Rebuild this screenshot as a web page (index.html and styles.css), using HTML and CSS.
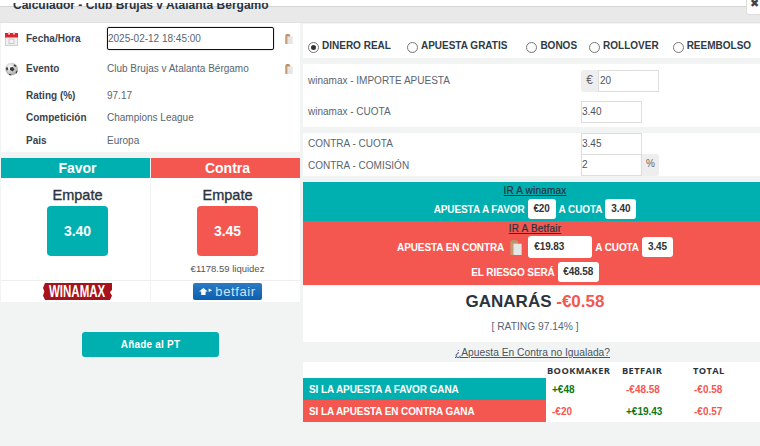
FILE: index.html
```html
<!DOCTYPE html>
<html lang="es">
<head>
<meta charset="utf-8">
<title>Calculador</title>
<link rel="stylesheet" href="styles.css">
</head>
<body>
<svg class="defs" width="0" height="0" aria-hidden="true">
  <symbol id="clip" viewBox="0 0 9 12">
    <rect x="0" y="1" width="6" height="11" fill="#c49a72"/>
    <rect x="2.500" y="3" width="6.500" height="9" fill="#e6e6e4"/>
    <rect x="1" y="0" width="4" height="2" fill="#b8926c"/>
  </symbol>
</svg>
<header class="top">
  <div class="top-bar">
    <h1 class="title">Calculador - Club Brujas v Atalanta Bérgamo</h1>
  </div>
  <button class="close" type="button"><span>✖</span></button>
</header>
<main class="layout">
  <section class="left">
    <div class="info">
      <div class="info-row r1">
        <svg class="ico" viewBox="0 0 13 14"><rect x=".5" y="2" width="12" height="11.500" fill="#f1f1f1" stroke="#cfcfcf"/><rect x="0" y="1" width="13" height="4.500" fill="#d9262e"/><rect x="3" y="0" width="2" height="2.500" fill="#f7c9c9"/><rect x="8" y="0" width="2" height="2.500" fill="#f7c9c9"/><rect x="4" y="7" width="5" height="4.500" fill="none" stroke="#c9c9c9"/></svg>
        <span class="lbl">Fecha/Hora</span>
        <span class="date-box">2025-02-12 18:45:00</span>
        <svg class="clip"><use href="#clip"/></svg>
      </div>
      <div class="info-row r2">
        <svg class="ico" viewBox="0 0 13 14"><defs><radialGradient id="ball" cx="40%" cy="35%" r="70%"><stop offset="0" stop-color="#fff"/><stop offset="1" stop-color="#a2a2a2"/></radialGradient></defs><circle cx="6.500" cy="7" r="6.300" fill="url(#ball)"/><path d="M5 5.500l3-.5 1.500 2.500-2 2-2.500-1.500zM.8 6l1.700-1 .7 2.500-1.500 1.300zM9.500 2.300l2 1.700-.8 1-2.200-1.200zM10.500 10.500l1.800-2.500.2 1.500-1 2.300zM4 12l2.500.3-.5 1.200-2-.6z" fill="#3a3a3a"/></svg>
        <span class="lbl">Evento</span>
        <span class="val">Club Brujas v Atalanta Bérgamo</span>
        <svg class="clip"><use href="#clip"/></svg>
      </div>
      <div class="info-row r3"><span class="ico"></span><span class="lbl">Rating (%)</span><span class="val">97.17</span></div>
      <div class="info-row r4"><span class="ico"></span><span class="lbl">Competición</span><span class="val">Champions League</span></div>
      <div class="info-row r5"><span class="ico"></span><span class="lbl">Pais</span><span class="val">Europa</span></div>
    </div>
    <div class="sides">
      <div class="side">
        <div class="side-head teal">Favor</div>
        <div class="side-body">
          <div class="pick">Empate</div>
          <div class="odd teal">3.40</div>
        </div>
        <div class="logo-cell"><span class="winamax"><span>WINAMAX</span></span></div>
      </div>
      <div class="side">
        <div class="side-head red">Contra</div>
        <div class="side-body">
          <div class="pick">Empate</div>
          <div class="odd red">3.45</div>
          <div class="liq">€1178.59 liquidez</div>
        </div>
        <div class="logo-cell">
          <span class="betfair"><svg class="bf-arrow" viewBox="0 0 16 10"><path d="M0 5l5-4 5 4H7.500v4h-5V5zM11 1.500l4 2-4 2z" fill="#fff"/></svg><span>betfair</span></span>
        </div>
      </div>
    </div>
    <div class="add-wrap"><button class="add" type="button">Añade al PT</button></div>
  </section>
  <section class="right">
    <div class="panel radios">
      <label class="radio on"><i></i>DINERO REAL</label>
      <label class="radio gratis"><i></i>APUESTA GRATIS</label>
      <label class="radio bonos"><i></i>BONOS</label>
      <label class="radio roll"><i></i>ROLLOVER</label>
      <label class="radio"><i></i>REEMBOLSO</label>
    </div>
    <div class="panel stake">
      <div class="frow">
        <span class="flbl">winamax - IMPORTE APUESTA</span>
        <span class="addon left-addon">€</span><span class="field wide">20</span>
      </div>
      <div class="frow">
        <span class="flbl">winamax - CUOTA</span>
        <span class="field">3.40</span>
      </div>
    </div>
    <div class="panel contra">
      <div class="frow tight">
        <span class="flbl">CONTRA - CUOTA</span>
        <span class="field">3.45</span>
      </div>
      <div class="frow tight">
        <span class="flbl">CONTRA - COMISIÓN</span>
        <span class="field">2</span><span class="addon right-addon">%</span>
      </div>
    </div>
    <div class="go teal go-a">
      <a class="go-link" href="#">IR A winamax</a>
      <div class="go-line">APUESTA A FAVOR <b class="chip c20">€20</b> A CUOTA <b class="chip c34">3.40</b></div>
    </div>
    <div class="go red go-b">
      <a class="go-link" href="#">IR A Betfair</a>
      <div class="go-line l2">APUESTA EN CONTRA <svg class="clip big"><use href="#clip"/></svg> <b class="chip lay">€19.83</b> A CUOTA <b class="chip c34">3.45</b></div>
      <div class="go-line l3">EL RIESGO SERÁ <b class="chip risk">€48.58</b></div>
    </div>
    <div class="panel result">
      <div class="win">GANARÁS <span>-€0.58</span></div>
      <div class="rate">[ RATING 97.14% ]</div>
    </div>
    <a class="unmatched" href="#">¿Apuesta En Contra no Igualada?</a>
    <div class="panel outcome">
      <div class="ot-row head">
        <span class="ot-name"></span><span class="c1">BOOKMAKER</span><span class="c2">BETFAIR</span><span class="c3">TOTAL</span>
      </div>
      <div class="ot-row">
        <span class="ot-name teal">SI LA APUESTA A FAVOR GANA</span><span class="c1 pos">+€48</span><span class="c2 neg">-€48.58</span><span class="c3 neg">-€0.58</span>
      </div>
      <div class="ot-row">
        <span class="ot-name red">SI LA APUESTA EN CONTRA GANA</span><span class="c1 neg">-€20</span><span class="c2 pos">+€19.43</span><span class="c3 neg">-€0.57</span>
      </div>
    </div>
  </section>
</main>
</body>
</html>
```
FILE: styles.css
```css
* { box-sizing: border-box; }
html, body { margin: 0; height: 446px; overflow: hidden; }
body { background: #f2f4f4; font-family: "Liberation Sans", Arial, sans-serif; font-size: 10px; color: #4a5560; overflow: hidden; }
.defs { position: absolute; }
.teal { background: #00afaf; }
.red { background: #f4574f; }

.top { height: 23px; padding-top: 6px; background: #fff; position: relative; }
.top-bar { height: 17px; background: #e9e9e9; border-top: 1px solid #d4d4d4; border-bottom: 1px solid #e2e2e2; }
.title { margin: -9px 0 0 13px; font-size: 12px; line-height: 14px; font-weight: 700; color: #2a3440; white-space: nowrap; clip-path: inset(5px -300px 0 0); }
.close { position: absolute; right: 0; top: 0; width: 14px; height: 15px; padding: 0; border: 1px solid #ddd; border-top: 0; border-right: 0; border-radius: 0 0 0 3px; background: #fff; color: #444; overflow: hidden; }
.close span { display: block; margin-top: -8px; padding-left: 2px; font-size: 11px; line-height: 20px; }

.layout { display: flex; gap: 3px; padding-left: 1px; width: 768px; }
.left { width: 299px; flex: none; }
.right { width: 464px; flex: none; padding-top: 1px; }

.info { height: 129px; background: #fff; }
.info-row { display: flex; align-items: center; }
.r1 { padding-top: 4px; height: 27px; }
.r2 { height: 31px; margin-top: 3px; }
.r3 { height: 22px; }
.r4 { height: 23px; }
.r5 { height: 23px; }
.ico { width: 13px; height: 14px; margin-left: 4px; flex: none; display: block; }
.lbl { width: 81px; margin-left: 8px; flex: none; font-size: 10px; font-weight: 700; color: #39434e; }
.val { width: 178px; flex: none; font-size: 10px; color: #5a6570; }
.date-box { width: 167px; height: 23px; margin-right: 11px; flex: none; border: 1px solid #111; border-radius: 2px; line-height: 21px; font-size: 10px; color: #5a6570; box-shadow: 0 0 1px #333; }
.clip { width: 8px; height: 10px; flex: none; display: block; }

.sides { display: flex; gap: 1px; margin-top: 6px; height: 144px; background: #f2f2f2; }
.side { width: 149px; display: flex; flex-direction: column; }
.side-head { height: 20px; padding-left: 4px; line-height: 20px; text-align: center; color: #fff; font-size: 14px; font-weight: 700; }
.side-body { height: 103px; background: #fff; border-bottom: 1px solid #eee; text-align: center; padding: 8px 0 0 4px; }
.pick { height: 20px; line-height: 18px; font-size: 14.500px; -webkit-text-stroke: .35px #2a3440; color: #2a3440; }
.odd { width: 61px; height: 50px; margin: 0 auto; border-radius: 4px; color: #fff; font-size: 14px; font-weight: 700; line-height: 50px; }
.liq { margin-top: 7px; font-size: 9.500px; color: #555; }
.logo-cell { flex: 1; background: #fff; display: flex; justify-content: center; align-items: flex-start; padding: 2px 0 0 4px; }
.winamax { width: 69px; height: 17px; background: #a8121c; color: #fff; font: 700 16px/17px "Liberation Sans", sans-serif; text-align: center; display: block; overflow: hidden; clip-path: polygon(2px 0, 100% 0, 100% 40%, 97% 55%, 100% 75%, 97% 100%, 3% 100%, 0 75%, 2% 50%, 0 30%); }
.winamax span { display: inline-block; transform: scaleX(.72); margin: 0 -20px; }
.betfair { width: 69px; height: 17px; background: linear-gradient(#2a7ac4, #0d5fae); border-radius: 2px; display: flex; align-items: center; justify-content: center; gap: 2px; color: #cfe2f4; font-size: 13px; letter-spacing: .6px; line-height: 16px; }
.bf-arrow { width: 14px; height: 9px; }

.add-wrap { display: flex; justify-content: center; padding-top: 30px; }
.add { width: 137px; height: 25px; border: 0; border-radius: 3px; background: #00afaf; color: #fff; font: 700 10px "Liberation Sans", sans-serif; letter-spacing: .2px; }

.panel { background: #fff; }
.radios { height: 34px; margin-bottom: 6px; display: flex; align-items: center; padding: 8px 0 0 5px; font-size: 10px; font-weight: 700; color: #2f3a44; white-space: nowrap; }
.radio { display: flex; align-items: center; flex: none; margin-right: 16px; }
.radio i { width: 11px; height: 11px; margin: 4px 3px 0 0; border: 1px solid #777; border-radius: 50%; flex: none; position: relative; }
.on i::after { content: ""; position: absolute; left: 2px; top: 2px; width: 5px; height: 5px; background: #333; border-radius: 50%; }
.gratis { margin-right: 19px; }
.bonos { margin-right: 12px; }
.roll { margin-right: 14px; }

.stake { height: 63px; margin-bottom: 6px; padding-top: 1px; }
.contra { height: 43px; margin-bottom: 6px; }
.frow { display: flex; align-items: center; height: 31px; padding-left: 5px; }
.frow.tight { height: 21.500px; }
.flbl { width: 273px; flex: none; font-size: 10px; color: #5a6570; }
.field { width: 61px; height: 22px; flex: none; border: 1px solid #ddd; background: #fff; line-height: 20px; font-size: 10px; color: #4a5560; }
.wide { padding-left: 1px; }
.addon { width: 17px; height: 22px; flex: none; background: #eeeeee; text-align: center; line-height: 20px; font-size: 10px; color: #666; }
.left-addon { border-radius: 3px 0 0 3px; font-size: 12px; }
.right-addon { border-radius: 0 3px 3px 0; }

.go { text-align: center; color: #fff; font-weight: 700; font-size: 10px; letter-spacing: -.1px; }
.go-a { height: 39px; }
.go-b { height: 64px; }
.go-link { display: block; height: 13px; line-height: 13px; color: #2a3440; font-size: 10px; font-weight: 400; letter-spacing: .2px; -webkit-text-stroke: .2px #2a3440; text-decoration: underline; padding-top: 2px; box-sizing: content-box; }
.go-b .go-link { padding-top: 1px; height: 12px; }
.go-line { display: flex; justify-content: center; align-items: center; gap: 3px; height: 24px; }
.l2 { height: 26px; }
.chip { display: block; height: 20px; line-height: 20px; background: #fff; border-radius: 3px; color: #333; font-size: 10px; font-weight: 700; }
.c20 { width: 28px; }
.c34 { width: 31px; }
.lay { width: 64px; height: 22px; line-height: 22px; text-align: left; padding-left: 6px; }
.risk { width: 41px; }
.clip.big { width: 12px; height: 15px; margin: 0 3px; }

.result { height: 56px; margin-top: 1px; text-align: center; padding-top: 5px; }
.win { font-size: 17px; line-height: 22px; font-weight: 700; color: #2a3440; }
.win span { color: #f4574f; }
.rate { margin-top: 8px; font-size: 10.250px; line-height: 12px; color: #5a6570; }
.unmatched { display: block; height: 20px; padding-right: 5px; line-height: 22px; text-align: center; font-size: 10.250px; color: #4a5560; }

.outcome { height: 60px; width: 457px; }
.ot-row { display: flex; align-items: center; height: 22px; font-size: 10px; font-weight: 700; }
.ot-row.head { height: 16px; font: 700 9.250px "Open Sans", sans-serif; letter-spacing: .4px; color: #2a3440; }
.ot-name { width: 243px; height: 100%; flex: none; display: flex; align-items: center; padding-left: 6px; color: #fff; letter-spacing: -.1px; white-space: nowrap; }
.c1 { width: 76px; flex: none; padding-left: 6px; }
.c2 { width: 71px; flex: none; padding-left: 4px; }
.c3 { flex: none; padding-left: 1px; }
.head .c1 { padding-left: 1px; }
.head .c2 { padding-left: 0; }
.head .c3 { padding-left: 0; }
.pos { color: #0a7a12; }
.neg { color: #f4574f; }
```
